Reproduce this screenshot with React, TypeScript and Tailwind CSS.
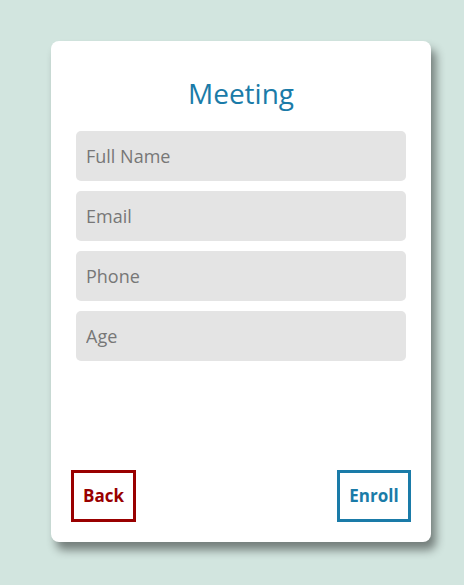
import React from "react";

export default function App() {
  const fields = ["Full Name", "Email", "Phone", "Age"];
  return (
    <div className="min-h-[585px] w-full bg-[#d2e5df] pt-[41px] pl-[51px]" style={{ fontFamily: '"Open Sans", "Noto Sans", sans-serif' }}>
      <div className="flex h-[501px] w-[380px] flex-col rounded-[8px] bg-white pt-[33px] pb-[20px] shadow-[5px_8px_10px_rgba(0,0,0,0.45)]">
        <h1 className="mb-[19px] text-center text-[28px] leading-[38px] text-[#1a7ba8]">Meeting</h1>
        <div className="flex flex-col gap-[10px] px-[25px]">
          {fields.map((f) => (
            <input
              key={f}
              placeholder={f}
              className="h-[50px] w-full rounded-[5px] bg-[#e4e4e4] px-[10px] text-[18px] text-[#333] outline-none placeholder:text-[#777]"
            />
          ))}
        </div>
        <div className="mt-auto flex items-center justify-between px-[20px]">
          <button className="flex h-[52px] w-[65px] items-center justify-center border-[3px] border-[#990000] bg-white text-[17px] font-bold text-[#990000]">
            Back
          </button>
          <button className="flex h-[52px] w-[74px] items-center justify-center border-[3px] border-[#1a7ba8] bg-white text-[17px] font-bold text-[#1a7ba8]">
            Enroll
          </button>
        </div>
      </div>
    </div>
  );
}
